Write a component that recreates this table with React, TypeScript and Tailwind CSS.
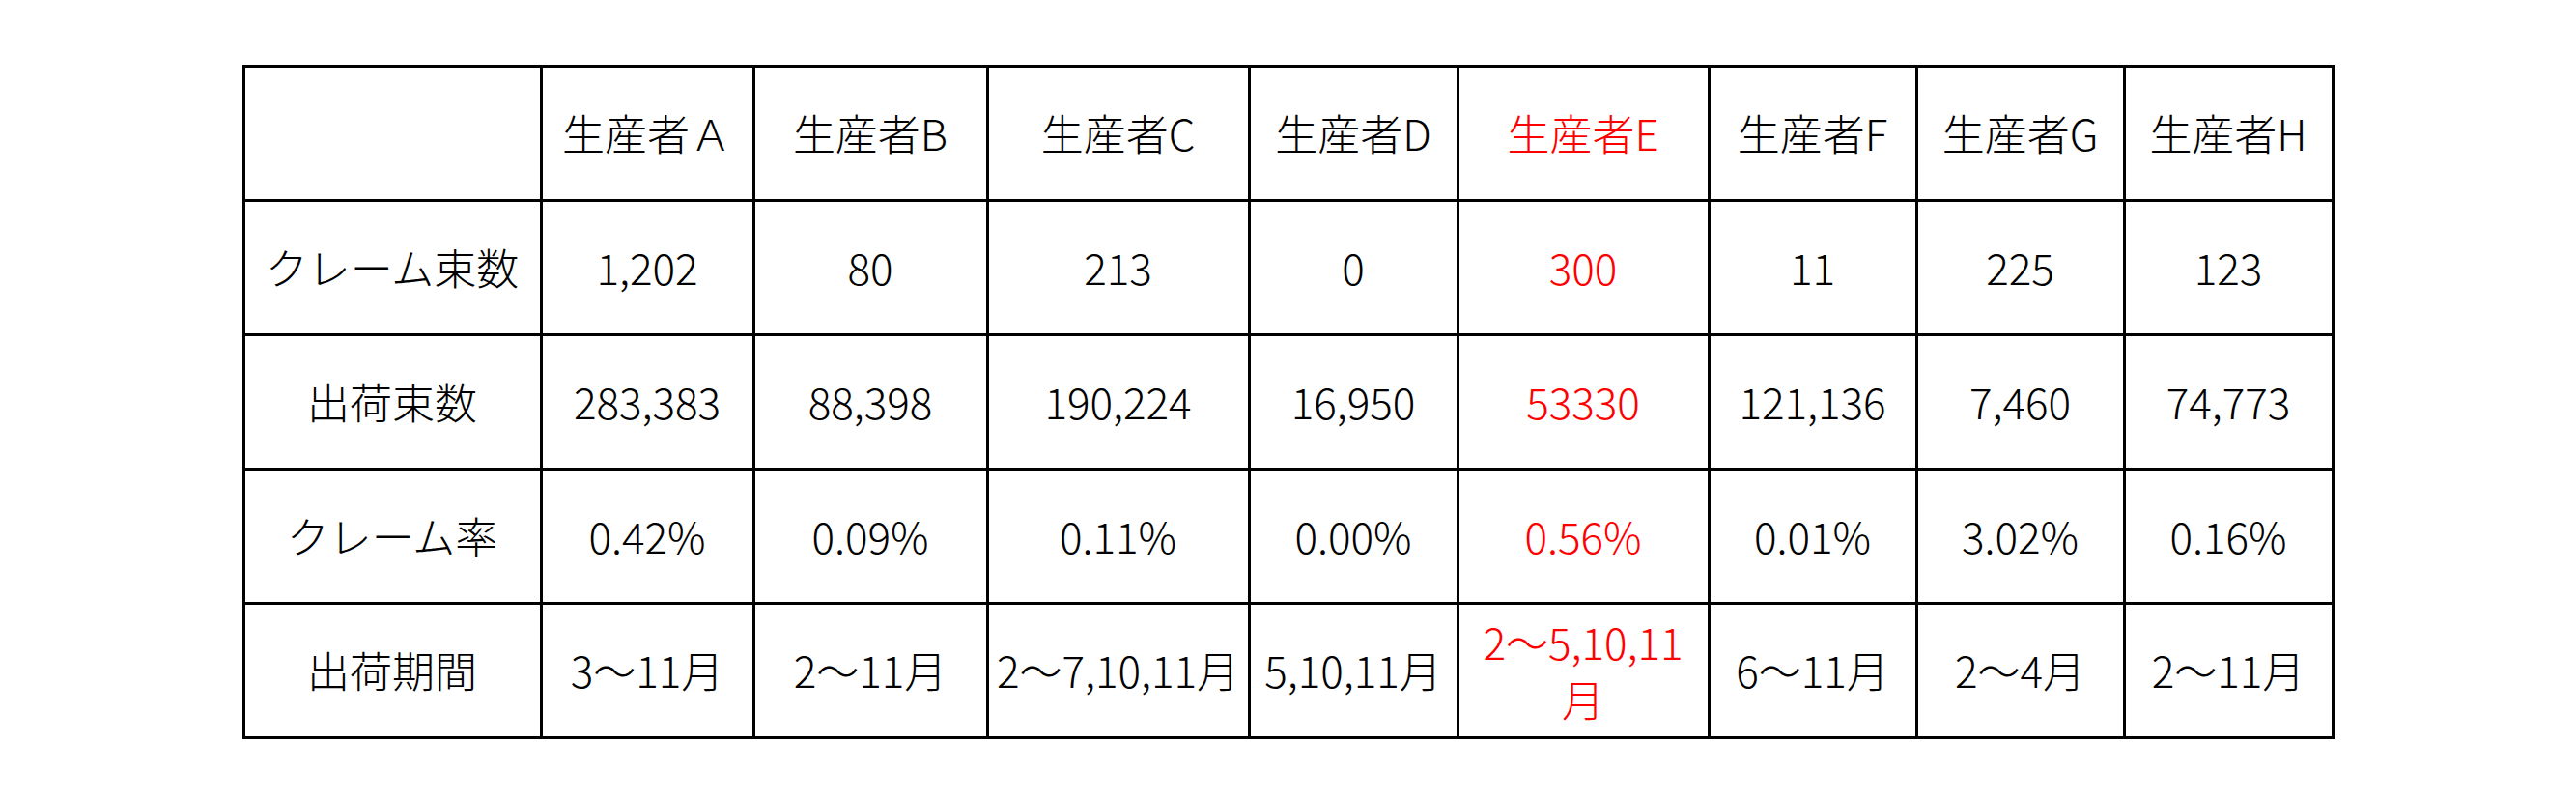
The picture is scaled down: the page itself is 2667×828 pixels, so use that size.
import React from 'react';

const producers = ['生産者Ａ', '生産者B', '生産者C', '生産者D', '生産者E', '生産者F', '生産者G', '生産者H'];

const rows: { label: string; values: string[] }[] = [
  { label: 'クレーム束数', values: ['1,202', '80', '213', '0', '300', '11', '225', '123'] },
  { label: '出荷束数', values: ['283,383', '88,398', '190,224', '16,950', '53330', '121,136', '7,460', '74,773'] },
  { label: 'クレーム率', values: ['0.42%', '0.09%', '0.11%', '0.00%', '0.56%', '0.01%', '3.02%', '0.16%'] },
  // E wraps in the source sheet, keep the break
  { label: '出荷期間', values: ['3～11月', '2～11月', '2～7,10,11月', '5,10,11月', '2～5,10,11\n月', '6～11月', '2～4月', '2～11月'] },
];

// index of the highlighted producer (E)
const HIGHLIGHT = 4;

const cell = 'border-[3px] border-black text-center align-middle px-0.5 leading-[1.35] whitespace-pre-line';

const App = () => {
  return (
    <div
      className="min-h-screen w-full bg-white pt-[67px] text-[44px] font-light text-black"
      style={{ fontFamily: '"Noto Sans CJK JP", "Noto Sans", sans-serif' }}
    >
      <table className="mx-auto w-[2163px] table-fixed border-collapse">
        <colgroup>
          <col className="w-[308px]" />
          <col className="w-[220px]" />
          <col className="w-[242px]" />
          <col className="w-[271px]" />
          <col className="w-[216px]" />
          <col className="w-[260px]" />
          <col className="w-[215px]" />
          <col className="w-[215px]" />
          <col className="w-[216px]" />
        </colgroup>
        <thead>
          <tr className="h-[139px]">
            <th className={`${cell} font-light`} />
            {producers.map((p, i) => (
              <th key={p} className={`${cell} font-light ${i === HIGHLIGHT ? 'text-[#ff0000]' : ''}`}>
                {p}
              </th>
            ))}
          </tr>
        </thead>
        <tbody>
          {rows.map((row) => (
            <tr key={row.label} className="h-[139px]">
              <td className={cell}>{row.label}</td>
              {row.values.map((v, i) => (
                <td key={i} className={`${cell} ${i === HIGHLIGHT ? 'text-[#ff0000]' : ''}`}>
                  {v}
                </td>
              ))}
            </tr>
          ))}
        </tbody>
      </table>
    </div>
  );
};

export default App;
